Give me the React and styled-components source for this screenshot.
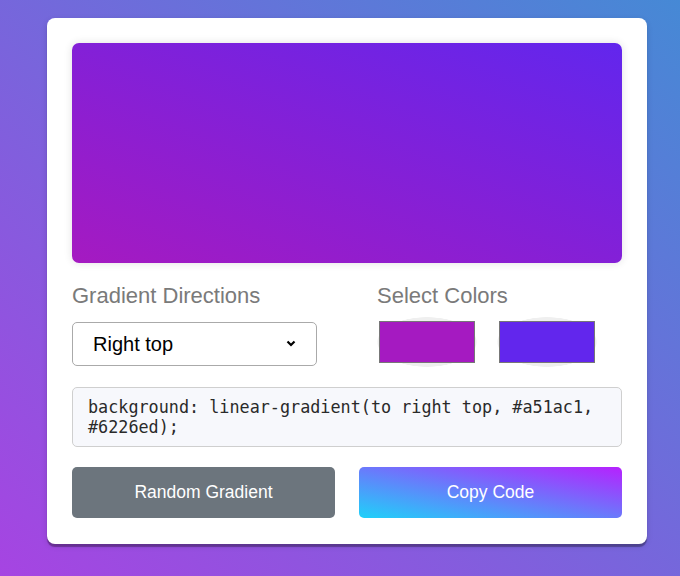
import React, { useState } from 'react'
import styled, { createGlobalStyle } from 'styled-components'

const GlobalStyle = createGlobalStyle`
    * {
        box-sizing: border-box;
    }
    html, body {
        margin: 0;
        padding: 0;
    }
    body {
        min-height: 576px;
        background: linear-gradient(to right top, #a644e2, #4689d5);
        font-family: "Liberation Sans", Arial, sans-serif;
    }
`

const Page = styled.div`
    padding: 18px 0 29px 47px;
`

const Card = styled.div`
    width: 600px;
    padding: 25px 25px 26px;
    background: #fff;
    border-radius: 8px;
    box-shadow: 0 3px 1px rgba(0, 0, 0, 0.3), 0 2px 6px rgba(0, 0, 0, 0.12);
`

const Preview = styled.div`
    height: 220px;
    border-radius: 7px;
    box-shadow: 0 0 8px rgba(0, 0, 0, 0.12);
`

const Options = styled.div`
    display: flex;
    justify-content: space-between;
    margin-top: 20px;
`

const Column = styled.div`
    width: 245px;
    display: flex;
    flex-direction: column;
`

const Label = styled.p`
    margin: 0 0 9px;
    font-size: 22px;
    line-height: 25px;
    color: #7a7a7a;
`

const Controls = styled.div`
    height: 50px;
    display: flex;
    align-items: center;
    gap: 20px;
`

const SelectBox = styled.div`
    position: relative;
    width: 245px;
    margin-top: 4px;
`

const Select = styled.select`
    appearance: none;
    width: 100%;
    height: 44px;
    padding: 0 20px;
    border: 1px solid #aaa;
    border-radius: 5px;
    background: #fff;
    font-family: "Liberation Sans", Arial, sans-serif;
    font-size: 20px;
    color: #000;
    outline: none;
`

const Chevron = styled.svg`
    position: absolute;
    top: 18px;
    right: 21px;
    pointer-events: none;
`

const ColorInput = styled.input`
    appearance: none;
    width: 100px;
    height: 50px;
    padding: 4px 2px;
    border: none;
    border-radius: 0;
    background: radial-gradient(ellipse closest-side, #efefef 98%, rgba(239, 239, 239, 0) 100%);
    cursor: pointer;
    &::-webkit-color-swatch-wrapper {
        padding: 0;
    }
    &::-webkit-color-swatch {
        border: 1px solid #777;
        border-radius: 0;
    }
`

const Code = styled.div`
    margin-top: 20px;
    padding: 9px 15px;
    background: #f7f8fc;
    border: 1px solid #cfcfcf;
    border-radius: 5px;
    font-family: "DejaVu Sans Mono", monospace;
    font-size: 16.8px;
    line-height: 20px;
    color: #2a2a2a;
`

const Buttons = styled.div`
    display: flex;
    justify-content: space-between;
    margin-top: 20px;
`

const Button = styled.button`
    width: 263px;
    height: 51px;
    border: none;
    border-radius: 5px;
    background: ${p => p.$primary ? 'linear-gradient(to right top, #1fd1f9, #b621fe)' : '#6c757d'};
    color: #fff;
    font-family: "Liberation Sans", Arial, sans-serif;
    font-size: 17.5px;
    cursor: pointer;
`

const directions = [
    ['top', 'Top'],
    ['right top', 'Right top'],
    ['right', 'Right'],
    ['right bottom', 'Right bottom'],
    ['bottom', 'Bottom'],
    ['left bottom', 'Left bottom'],
    ['left', 'Left'],
    ['left top', 'Left top'],
]

const App = () => {
    const [dir, setDir] = useState('right top')
    const [c1, setC1] = useState('#a51ac1')
    const [c2, setC2] = useState('#6226ed')

    const gradient = `linear-gradient(to ${dir}, ${c1}, ${c2})`
    const code = `background: ${gradient};`

    return (
        <Page>
            <GlobalStyle />
            <Card>
                <Preview style={{ background: gradient }} />
                <Options>
                    <Column>
                        <Label>Gradient Directions</Label>
                        <Controls>
                            <SelectBox>
                                <Select value={dir} onChange={e => setDir(e.target.value)}>
                                    {directions.map(([v, t]) => (
                                        <option key={v} value={v}>{t}</option>
                                    ))}
                                </Select>
                                <Chevron width="10" height="7" viewBox="0 0 10 7">
                                    <path d="M1.5 1.5 L5 5 L8.5 1.5" fill="none" stroke="#000" strokeWidth="2.2" />
                                </Chevron>
                            </SelectBox>
                        </Controls>
                    </Column>
                    <Column>
                        <Label>Select Colors</Label>
                        <Controls>
                            <ColorInput type="color" value={c1} onChange={e => setC1(e.target.value)} />
                            <ColorInput type="color" value={c2} onChange={e => setC2(e.target.value)} />
                        </Controls>
                    </Column>
                </Options>
                <Code>{code}</Code>
                <Buttons>
                    <Button>Random Gradient</Button>
                    <Button $primary>Copy Code</Button>
                </Buttons>
            </Card>
        </Page>
    )
}

export default App
